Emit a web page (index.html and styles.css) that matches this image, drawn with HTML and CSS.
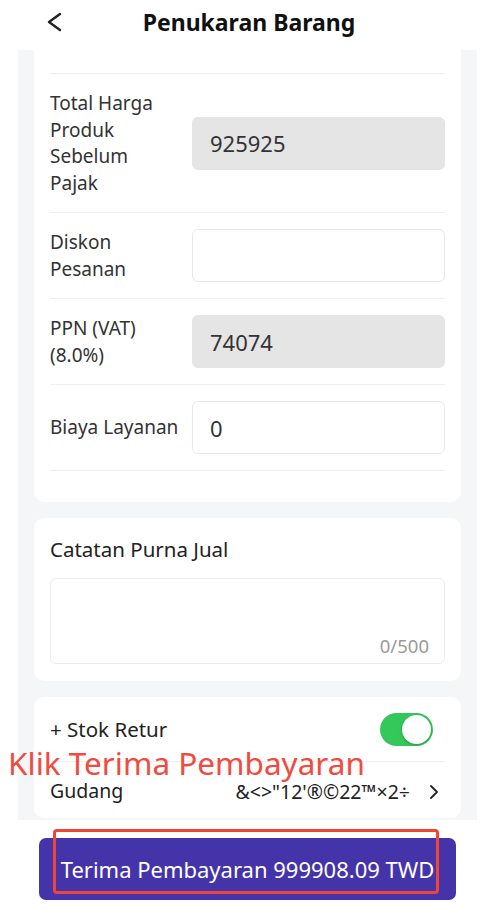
FILE: index.html
```html
<!DOCTYPE html>
<html lang="id">
<head>
    <meta charset="UTF-8">
    <meta name="viewport" content="width=device-width, initial-scale=1.0">
    <title>Penukaran Barang</title>
    <link rel="stylesheet" href="styles.css">
</head>
<body>
    <div class="header">
        <svg class="back" width="16" height="20" viewBox="0 0 16 20">
            <path d="M14 2 L3 10 L14 18" fill="none" stroke="#222" stroke-width="2.4" stroke-linecap="round" stroke-linejoin="round"/>
        </svg>
        <h1>Penukaran Barang</h1>
    </div>

    <div class="scroll">
        <div class="scroll-inner">
            <div class="card form-card">
                <div class="row first-row">
                    <label>Total Harga Produk (Termasuk Pajak)</label>
                    <input class="field readonly" type="text" value="1000000" readonly>
                </div>
                <div class="row">
                    <label>Total Harga Produk Sebelum Pajak</label>
                    <input class="field readonly" type="text" value="925925" readonly>
                </div>
                <div class="row">
                    <label>Diskon Pesanan</label>
                    <input class="field" type="text" value="">
                </div>
                <div class="row">
                    <label>PPN (VAT) (8.0%)</label>
                    <input class="field readonly" type="text" value="74074" readonly>
                </div>
                <div class="row">
                    <label>Biaya Layanan</label>
                    <input class="field" type="text" value="0">
                </div>
            </div>

            <div class="card notes-card">
                <div class="card-title">Catatan Purna Jual</div>
                <div class="notes-box">
                    <span class="counter">0/500</span>
                </div>
            </div>

            <div class="card stock-card">
                <div class="row switch-row">
                    <span class="row-label">+ Stok Retur</span>
                    <span class="switch"><span class="knob"></span></span>
                </div>
                <div class="row link-row">
                    <span class="row-label">Gudang</span>
                    <span class="row-value">&amp;&lt;&gt;"12'®©22™×2÷</span>
                    <svg class="chevron" width="12" height="16" viewBox="0 0 12 16">
                        <path d="M3 2 L9 8 L3 14" fill="none" stroke="#222" stroke-width="1.8" stroke-linecap="round" stroke-linejoin="round"/>
                    </svg>
                </div>
            </div>
        </div>
    </div>

    <div class="footer">
        <button class="pay-btn">Terima Pembayaran 999908.09 TWD</button>
    </div>

    <div class="hint-text">Klik Terima Pembayaran</div>
    <div class="hint-box"></div>
</body>
</html>
```

FILE: styles.css
```css
body {
    margin: 0;
    width: 498px;
    height: 914px;
    overflow: hidden;
    position: relative;
    font-family: "Noto Sans", "Open Sans", sans-serif;
    background: #fff;
    color: #333;
}
.header {
    height: 50px;
    display: flex;
    align-items: flex-start;
    padding: 0 62px 0 46px;
}
.back {
    margin-top: 12px;
    flex-shrink: 0;
}
.header h1 {
    flex: 1;
    margin: 0;
    text-align: center;
    font-size: 23px;
    font-weight: 700;
    line-height: 44px;
    color: #111;
}
.scroll {
    margin: 0 21px 0 18px;
    height: 770px;
    padding: 0 16px;
    background: #f5f6f8;
    overflow: hidden;
}
.scroll-inner {
    margin-top: -121px;
}
.card {
    background: #fff;
    border-radius: 10px;
    padding: 0 16px;
    margin-bottom: 16px;
}
.form-card {
    padding-bottom: 31px;
}
.row {
    display: flex;
    align-items: center;
    padding: 16px 0;
    border-bottom: 1px solid #eeeff1;
}
.row label {
    width: 129px;
    flex-shrink: 0;
    margin-right: 13px;
    font-size: 19px;
    line-height: 26.5px;
    color: #333;
}
.first-row label {
    margin-bottom: 6px;
}
.field {
    flex: 1;
    min-width: 0;
    height: 53px;
    box-sizing: border-box;
    border: 1px solid #e8e8e8;
    border-radius: 6px;
    padding: 0 17px;
    font-family: "Noto Sans", "Open Sans", sans-serif;
    font-size: 22px;
    color: #333;
    background: #fff;
    outline: none;
}
.field.readonly {
    background: #e5e5e5;
    border-color: #e5e5e5;
}
.notes-card {
    padding: 18px 16px 17px;
}
.card-title {
    font-size: 20.5px;
    line-height: 26px;
    color: #222;
}
.notes-box {
    margin-top: 16px;
    height: 86px;
    box-sizing: border-box;
    border: 1px solid #ececec;
    border-radius: 6px;
    padding: 0 15px 5px;
    display: flex;
    align-items: flex-end;
    justify-content: flex-end;
}
.counter {
    font-size: 18.5px;
    color: #9a9a9a;
}
.stock-card {
    margin-bottom: 0;
}
.row-label {
    flex: 1;
    font-size: 20.5px;
    line-height: 26.5px;
    color: #222;
}
.switch-row {
    padding: 16px 0 15px;
}
.switch {
    width: 53px;
    height: 33px;
    margin-right: 12px;
    border-radius: 17px;
    background: #34c759;
    display: flex;
    align-items: center;
    justify-content: flex-end;
    padding: 2px;
    box-sizing: border-box;
}
.knob {
    width: 29px;
    height: 29px;
    border-radius: 50%;
    background: #fff;
    box-shadow: 0 1px 3px rgba(0, 0, 0, 0.25);
}
.link-row {
    padding: 16px 0 13px;
    border-bottom: none;
}
.link-row .row-label {
    font-size: 19.5px;
}
.row-value {
    font-size: 19.5px;
    color: #222;
}
.chevron {
    margin-left: 18px;
    margin-right: 5px;
}
.footer {
    padding: 18px 0 0 39px;
}
.pay-btn {
    width: 417px;
    height: 62px;
    border: none;
    border-radius: 7px;
    background: #4534a9;
    color: #fff;
    font-family: "Noto Sans", "Open Sans", sans-serif;
    font-size: 22px;
    padding: 0;
}
.hint-text {
    position: absolute;
    left: 8px;
    top: 744px;
    font-size: 31.5px;
    line-height: 38px;
    color: #f24a3f;
}
.hint-box {
    position: absolute;
    left: 53px;
    top: 829px;
    width: 386px;
    height: 65px;
    box-sizing: border-box;
    border: 3px solid #ee4538;
    border-radius: 4px;
}
```
